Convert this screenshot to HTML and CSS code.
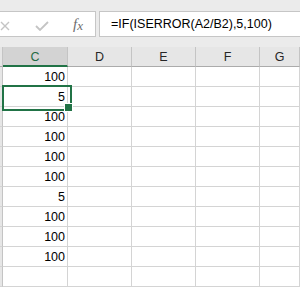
FILE: index.html
```html
<!DOCTYPE html>
<html>
<head>
<meta charset="utf-8">
<link rel="stylesheet" href="styles.css">
</head>
<body>
<div class="app">
  <div class="fbar">
    <div class="namebox">
      <svg class="ico-x" width="10" height="10" viewBox="0 0 10 10"><path d="M1 1 L9 9 M9 1 L1 9" stroke="#c4c4c4" stroke-width="1.4" fill="none"/></svg>
      <svg class="ico-check" width="14" height="10" viewBox="0 0 14 10"><path d="M1 5 L5 9 L13 1" stroke="#c4c4c4" stroke-width="1.8" fill="none"/></svg>
      <span class="fx">f<span class="fx-x">x</span></span>
    </div>
    <div class="formula">=IF(ISERROR(A2/B2),5,100)</div>
  </div>
  <div class="sheet">
    <div class="hd corner"></div>
    <div class="hd sel">C</div>
    <div class="hd">D</div>
    <div class="hd">E</div>
    <div class="hd">F</div>
    <div class="hd">G</div>

    <div class="rh"></div><div class="c num">100</div><div class="c"></div><div class="c"></div><div class="c"></div><div class="c"></div>
    <div class="rh"></div><div class="c num active">5</div><div class="c"></div><div class="c"></div><div class="c"></div><div class="c"></div>
    <div class="rh"></div><div class="c num">100</div><div class="c"></div><div class="c"></div><div class="c"></div><div class="c"></div>
    <div class="rh"></div><div class="c num">100</div><div class="c"></div><div class="c"></div><div class="c"></div><div class="c"></div>
    <div class="rh"></div><div class="c num">100</div><div class="c"></div><div class="c"></div><div class="c"></div><div class="c"></div>
    <div class="rh"></div><div class="c num">100</div><div class="c"></div><div class="c"></div><div class="c"></div><div class="c"></div>
    <div class="rh"></div><div class="c num">5</div><div class="c"></div><div class="c"></div><div class="c"></div><div class="c"></div>
    <div class="rh"></div><div class="c num">100</div><div class="c"></div><div class="c"></div><div class="c"></div><div class="c"></div>
    <div class="rh"></div><div class="c num">100</div><div class="c"></div><div class="c"></div><div class="c"></div><div class="c"></div>
    <div class="rh"></div><div class="c num">100</div><div class="c"></div><div class="c"></div><div class="c"></div><div class="c"></div>
    <div class="rh"></div><div class="c"></div><div class="c"></div><div class="c"></div><div class="c"></div><div class="c"></div>
  </div>
</div>
</body>
</html>
```

FILE: styles.css
```css
* { box-sizing: border-box; }
html, body { margin: 0; padding: 0; }
body {
  width: 300px;
  height: 287px;
  overflow: hidden;
  background: #fff;
  font-family: "Liberation Sans", Arial, sans-serif;
  font-size: 12.5px;
}
.app { width: 300px; }

.fbar {
  height: 47px;
  background: #ebebeb;
  padding-top: 11px;
  display: flex;
  gap: 3px;
}
.namebox {
  width: 96px;
  height: 26px;
  background: #fff;
  border: 1px solid #c6c6c6;
  border-left: none;
  display: flex;
  align-items: center;
}
.ico-x { margin-left: 0; margin-top: 3px; }
.ico-check { margin-left: 25px; margin-top: 3px; }
.fx {
  margin-left: 24px;
  font-family: "Liberation Serif", "DejaVu Serif", serif;
  font-style: italic;
  font-size: 15px;
  color: #6e6e6e;
  line-height: 1;
  margin-top: 1px;
}
.fx-x { font-size: 13px; position: relative; top: 1px; }
.formula {
  flex: 1;
  height: 26px;
  background: #fff;
  border: 1px solid #c6c6c6;
  border-right: none;
  padding-left: 11px;
  line-height: 25px;
  color: #000;
  white-space: nowrap;
  overflow: hidden;
}

.sheet {
  display: grid;
  grid-template-columns: 3px 65px 64px 64px 64px 1fr;
  grid-auto-rows: 20px;
}
.hd {
  background: #e6e6e6;
  border-right: 1px solid #c4c4c4;
  border-bottom: 1px solid #ababab;
  text-align: center;
  color: #262626;
  line-height: 19px;
  padding-top: 1px;
}
.hd.sel {
  background: #d3d3d3;
  color: #1f6b43;
  border-bottom: 2px solid #217346;
}
.rh {
  background: #e6e6e6;
  border-right: 1px solid #c4c4c4;
  border-bottom: 1px solid #d4d4d4;
}
.c {
  border-right: 1px solid #d4d4d4;
  border-bottom: 1px solid #d4d4d4;
  color: #000;
  line-height: 19px;
  padding-top: 1px;
}
.num { text-align: right; padding-right: 2px; }
.active { position: relative; }
.active::after {
  content: "";
  position: absolute;
  left: -1px;
  top: -2px;
  width: 66px;
  height: 22px;
  border: 2px solid #217346;
  pointer-events: none;
}
.active::before {
  content: "";
  position: absolute;
  left: 61px;
  top: 16px;
  width: 7px;
  height: 7px;
  background: #217346;
  border: 1px solid #fff;
  z-index: 2;
}
```
